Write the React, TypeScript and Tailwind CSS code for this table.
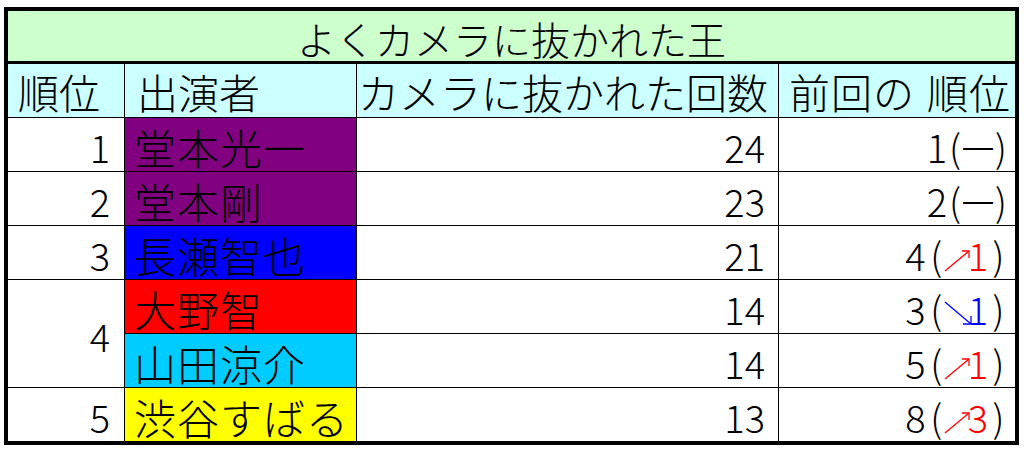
import type { ReactNode } from "react";

type Trend = { dir: "up" | "down" | "same"; n?: string };

type Row = {
  rank: string | null;
  span?: boolean;
  name: string;
  bg: string;
  count: string;
  prev: string;
  trend: Trend;
};

const rows: Row[] = [
  { rank: "1", name: "堂本光一", bg: "bg-[#800080]", count: "24", prev: "1", trend: { dir: "same" } },
  { rank: "2", name: "堂本剛", bg: "bg-[#800080]", count: "23", prev: "2", trend: { dir: "same" } },
  { rank: "3", name: "長瀬智也", bg: "bg-[#0000ff]", count: "21", prev: "4", trend: { dir: "up", n: "1" } },
  { rank: "4", span: true, name: "大野智", bg: "bg-[#ff0000]", count: "14", prev: "3", trend: { dir: "down", n: "1" } },
  { rank: null, name: "山田涼介", bg: "bg-[#00ccff]", count: "14", prev: "5", trend: { dir: "up", n: "1" } },
  { rank: "5", name: "渋谷すばる", bg: "bg-[#ffff00]", count: "13", prev: "8", trend: { dir: "up", n: "3" } },
];

function Arrow({ dir }: { dir: "up" | "down" }) {
  const color = dir === "up" ? "#ff0000" : "#0000ff";
  return (
    <svg width="21" height="26" viewBox="0 0 21 26" className="inline-block overflow-visible">
      {dir === "up" ? (
        <g stroke={color} strokeWidth="1.3" fill="none">
          <line x1="-2" y1="23" x2="22" y2="3" />
          <polyline points="15,3 22,3 22,10" />
        </g>
      ) : (
        <g stroke={color} strokeWidth="1.3" fill="none">
          <line x1="-2" y1="0" x2="24" y2="22" />
          <polyline points="24,14 24,22 16,22" />
        </g>
      )}
    </svg>
  );
}

function Paren({ children, w = "w-[21px]" }: { children: ReactNode; w?: string }) {
  return <span className={`inline-block text-center ${w}`}>{children}</span>;
}

function Prev({ prev, trend }: { prev: string; trend: Trend }) {
  if (trend.dir === "same") {
    return (
      <span className="whitespace-nowrap">
        {prev}
        <Paren w="w-[16px]">(</Paren>
        <span className="relative -top-[6px] font-['Liberation_Sans',sans-serif] text-[30px]">—</span>
        <Paren w="w-[16px]">)</Paren>
      </span>
    );
  }
  return (
    <span className="whitespace-nowrap">
      {prev}
      <Paren>(</Paren>
      <Arrow dir={trend.dir} />
      <span className={trend.dir === "up" ? "text-[#ff0000]" : "text-[#0000ff]"}>{trend.n}</span>
      <Paren>)</Paren>
    </span>
  );
}

export default function App() {
  return (
    <div className="h-[449px] w-[1024px] overflow-hidden bg-white font-['Noto_Sans_CJK_JP',sans-serif] font-light text-black">
      <div className="ml-[4px] mt-[7px] w-[1015px] border-4 border-black">
        <div className="h-[53px] border-b-[3px] border-black bg-[#ccffcc] pt-[2px] text-center text-[39px] leading-[50px]">
          よくカメラに抜かれた王
        </div>
        <div className="grid grid-cols-[116px_231px_421px_236px] auto-rows-[53px] gap-px bg-black">
          <div className="bg-[#ccffff] pl-[10px] pt-[2px] text-[41px] leading-[50px]">順位</div>
          <div className="bg-[#ccffff] pl-[12px] pt-[2px] text-[41px] leading-[50px]">出演者</div>
          <div className="whitespace-nowrap bg-[#ccffff] pl-[1px] pt-[2px] text-[41px] leading-[50px]">
            カメラに抜かれた回数
          </div>
          <div className="whitespace-nowrap bg-[#ccffff] pl-[10px] pt-[2px] text-[41px] leading-[50px] tracking-[1px]">
            前回の<span className="inline-block w-[12px]" />順位
          </div>

          {rows.map((r) => (
            <div key={r.name} className="contents">
              {r.rank !== null && (
                <div
                  className={
                    r.span
                      ? "row-span-2 flex items-center justify-end bg-white pr-[14px] pt-[4px] text-[38px] leading-[48px]"
                      : "bg-white pr-[14px] pt-[5px] text-right text-[38px] leading-[48px]"
                  }
                >
                  {r.rank}
                </div>
              )}
              <div className={`${r.bg} whitespace-nowrap pl-[9px] pt-[4px] text-[42px] leading-[49px] tracking-[1px]`}>
                {r.name}
              </div>
              <div className="bg-white pr-[13px] pt-[5px] text-right text-[38px] leading-[48px]">{r.count}</div>
              <div className="bg-white pr-[6px] pt-[5px] text-right text-[38px] leading-[48px]">
                <Prev prev={r.prev} trend={r.trend} />
              </div>
            </div>
          ))}
        </div>
      </div>
    </div>
  );
}
